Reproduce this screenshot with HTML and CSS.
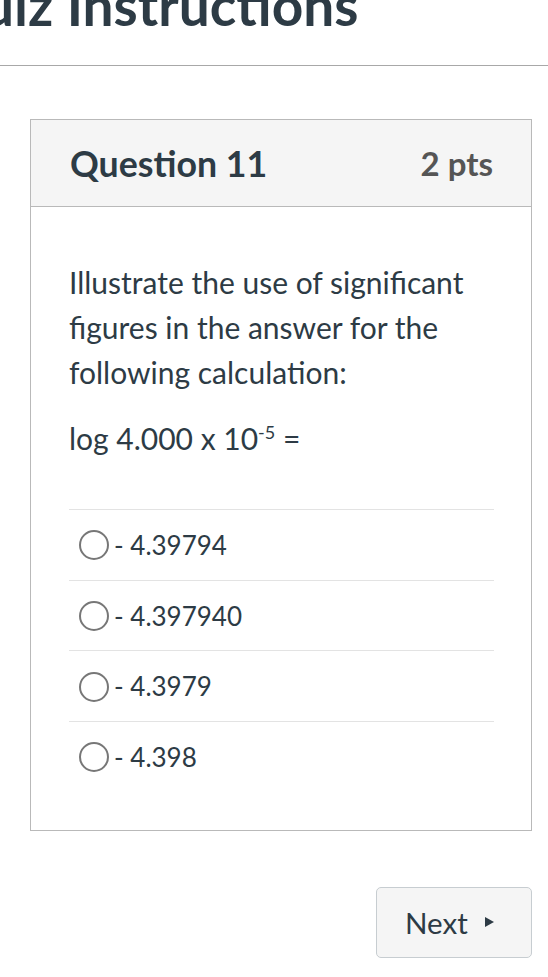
FILE: index.html
```html
<!DOCTYPE html>
<html lang="en">
<head>
<meta charset="utf-8">
<title>Quiz Instructions</title>
<link rel="stylesheet" href="styles.css">
</head>
<body>
<header class="page-header">
  <h1 class="page-title">Quiz Instructions</h1>
</header>
<main class="content">
  <section class="question">
    <div class="question-header">
      <h2 class="question-name">Question 11</h2>
      <span class="question-points">2 pts</span>
    </div>
    <div class="question-body">
      <p class="question-text">Illustrate the use of significant figures in the answer for the following calculation:</p>
      <p class="question-text">log 4.000 x 10<sup>-5</sup> =</p>
      <ul class="answers">
        <li class="answer"><span class="radio"></span><span class="answer-label">- 4.39794</span></li>
        <li class="answer"><span class="radio"></span><span class="answer-label">- 4.397940</span></li>
        <li class="answer"><span class="radio"></span><span class="answer-label">- 4.3979</span></li>
        <li class="answer"><span class="radio"></span><span class="answer-label">- 4.398</span></li>
      </ul>
    </div>
  </section>
  <div class="nav">
    <button class="next-btn" type="button">Next <span class="caret"></span></button>
  </div>
</main>
</body>
</html>
```
FILE: styles.css
```css
html, body {
  margin: 0;
  padding: 0;
  background: #ffffff;
}
body {
  font-family: Lato, "Open Sans", sans-serif;
  color: #2d3b45;
  overflow: hidden;
}
.page-header {
  margin-top: -22px;
  padding-bottom: 32px;
  border-bottom: 1px solid #a8a8a8;
  overflow: hidden;
}
.page-title {
  margin: 0 0 0 -61px;
  font-size: 55px;
  line-height: 55px;
  font-weight: 700;
  white-space: nowrap;
}
.content {
  padding: 53px 16px 0 30px;
}
.question {
  border: 1px solid #b9b9b9;
}
.question-header {
  display: flex;
  justify-content: space-between;
  align-items: center;
  height: 86px;
  padding: 0 38px 0 38px;
  background: #f5f5f5;
  border-bottom: 1px solid #b9b9b9;
}
.question-name {
  margin: 0 0 0 1px;
  font-size: 35.7px;
  font-weight: 700;
  color: #2d3b45;
}
.question-points {
  font-size: 33px;
  font-weight: 700;
  color: #555555;
}
.question-body {
  padding: 53px 37px 38px 38px;
}
.question-text {
  margin: 0 0 21px 0;
  font-size: 30px;
  line-height: 45px;
}
.question-text sup {
  font-size: 18px;
  line-height: 0;
}
.answers {
  list-style: none;
  margin: 48px 0 0 0;
  padding: 0;
}
.answer {
  display: flex;
  align-items: center;
  gap: 5px;
  height: 69.7px;
  border-top: 1px solid #e3e3e3;
  font-size: 26px;
}
.radio {
  box-sizing: border-box;
  width: 30px;
  height: 30px;
  margin-left: 10px;
  margin-top: 1px;
  border: 2px solid #777777;
  border-radius: 50%;
  background: #ffffff;
}
.answer-label {
  color: #2d3b45;
}
.nav {
  display: flex;
  justify-content: flex-end;
  margin-top: 56px;
}
.next-btn {
  display: flex;
  align-items: center;
  gap: 17px;
  box-sizing: border-box;
  width: 156px;
  height: 71px;
  padding: 0 0 0 28px;
  font-family: Lato, "Open Sans", sans-serif;
  font-size: 29.5px;
  color: #2d3b45;
  background: #f5f5f5;
  border: 1px solid #c7cdd1;
  border-radius: 5px;
}
.caret {
  width: 0;
  height: 0;
  border-top: 5.5px solid transparent;
  border-bottom: 5.5px solid transparent;
  border-left: 9px solid #2d3b45;
}
```
